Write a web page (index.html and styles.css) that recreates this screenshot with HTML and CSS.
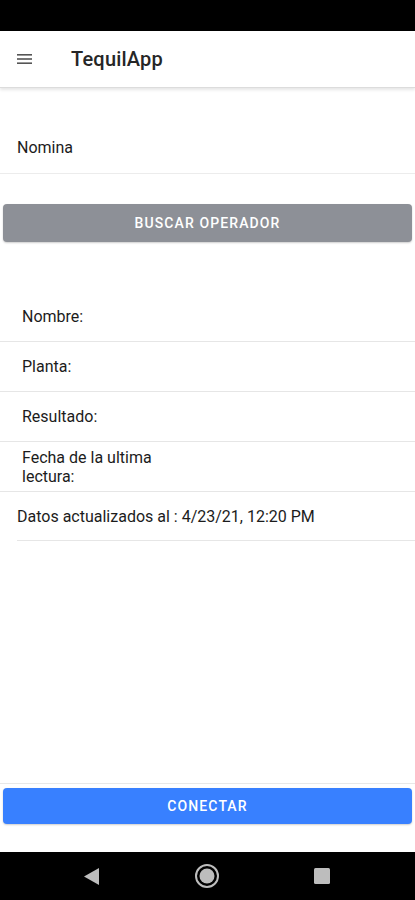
FILE: index.html
```html
<!DOCTYPE html>
<html lang="es">
<head>
  <meta charset="UTF-8">
  <meta name="viewport" content="width=device-width, initial-scale=1.0">
  <title>TequilApp</title>
  <link rel="stylesheet" href="styles.css">
</head>
<body>
  <div class="app">
    <div class="status-bar"></div>

    <header class="toolbar">
      <button class="menu-btn" aria-label="Menu">
        <svg width="15" height="10" viewBox="0 0 15 10">
          <rect x="0" y="0" width="15" height="1.6" fill="#555"/>
          <rect x="0" y="4.2" width="15" height="1.6" fill="#555"/>
          <rect x="0" y="8.4" width="15" height="1.6" fill="#555"/>
        </svg>
      </button>
      <h1 class="title">TequilApp</h1>
    </header>

    <main class="content">
      <div class="item item-input">
        <span class="label">Nomina</span>
      </div>

      <button class="btn btn-gray">BUSCAR OPERADOR</button>

      <ul class="info-list">
        <li class="item">Nombre:</li>
        <li class="item">Planta:</li>
        <li class="item">Resultado:</li>
        <li class="item item-two">Fecha de la ultima<br>lectura:</li>
      </ul>

      <div class="updated">Datos actualizados al : 4/23/21, 12:20 PM</div>
    </main>

    <footer class="footer">
      <button class="btn btn-blue">CONECTAR</button>
    </footer>

    <nav class="nav-bar">
      <svg width="16" height="17" viewBox="0 0 16 17"><polygon points="15,0 15,17 0,8.5" fill="#bdbdbd"/></svg>
      <svg width="26" height="26" viewBox="0 0 26 26">
        <circle cx="13" cy="13" r="11" fill="none" stroke="#bdbdbd" stroke-width="2"/>
        <circle cx="13" cy="13" r="7.5" fill="#bdbdbd"/>
      </svg>
      <svg width="16" height="16" viewBox="0 0 16 16"><rect width="16" height="16" rx="1.5" fill="#bdbdbd"/></svg>
    </nav>
  </div>
</body>
</html>
```

FILE: styles.css
```css
body {
  margin: 0;
  font-family: Roboto, "Liberation Sans", Arial, sans-serif;
  color: #1c1c1c;
  background: #ffffff;
}

.app {
  display: flex;
  flex-direction: column;
  height: 900px;
  overflow: hidden;
}

.status-bar {
  height: 31px;
  background: #000000;
  flex-shrink: 0;
}

.toolbar {
  display: flex;
  align-items: center;
  height: 56px;
  background: #ffffff;
  border-bottom: 1px solid #dcdcdc;
  box-shadow: 0 2px 3px rgba(0, 0, 0, 0.1);
  flex-shrink: 0;
  position: relative;
  z-index: 1;
}

.menu-btn {
  background: none;
  border: none;
  padding: 0;
  margin-left: 17px;
  width: 15px;
  height: 10px;
  display: flex;
}

.title {
  margin: 0 0 0 39px;
  font-size: 20px;
  font-weight: 500;
  color: #262626;
  letter-spacing: 0.2px;
}

.content {
  flex: 1;
  display: flex;
  flex-direction: column;
}

.item {
  display: flex;
  align-items: center;
  height: 49px;
  padding-left: 22px;
  font-size: 16px;
  border-bottom: 1px solid #e6e6e6;
}

.item-input {
  margin-top: 34px;
  height: 51px;
  padding-left: 17px;
  border-bottom-color: #ececec;
}

.btn {
  display: block;
  width: calc(100% - 6px);
  margin: 0 3px;
  border: none;
  border-radius: 4px;
  color: #ffffff;
  font-family: Roboto, "Liberation Sans", Arial, sans-serif;
  font-size: 14px;
  font-weight: 500;
  letter-spacing: 1.1px;
  box-shadow: 0 1px 2px rgba(0, 0, 0, 0.2);
}

.btn-gray {
  margin-top: 30px;
  height: 38px;
  background: #8d9097;
}

.btn-blue {
  height: 36px;
  background: #3880ff;
}

.info-list {
  list-style: none;
  margin: 50px 0 0;
  padding: 0;
}

.item-two {
  line-height: 19px;
}

.updated {
  display: flex;
  align-items: center;
  height: 48px;
  margin-left: 17px;
  font-size: 16px;
  border-bottom: 1px solid #e6e6e6;
}

.footer {
  height: 69px;
  border-top: 1px solid #e8e8e8;
  padding-top: 4px;
  box-sizing: border-box;
  flex-shrink: 0;
}

.nav-bar {
  height: 48px;
  background: #000000;
  display: flex;
  align-items: center;
  justify-content: space-between;
  padding: 0 85px 0 84px;
  flex-shrink: 0;
}
```
